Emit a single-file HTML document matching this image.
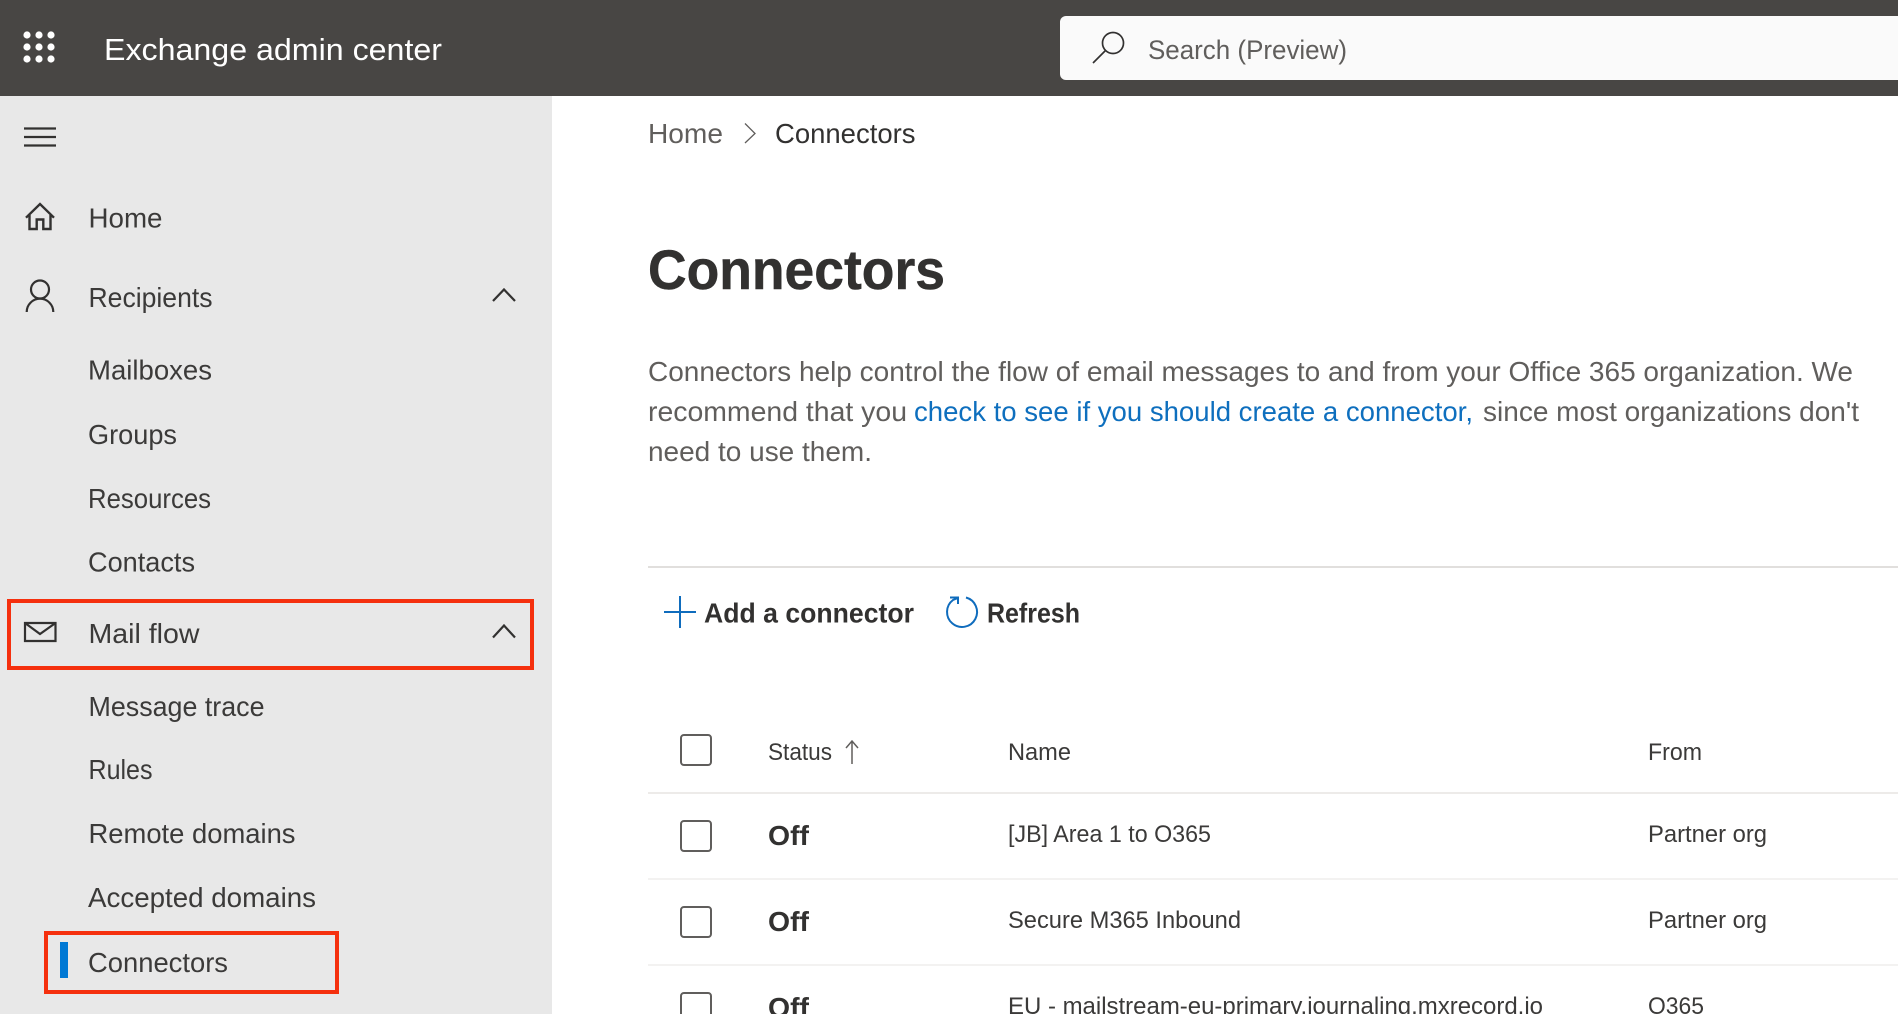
<!DOCTYPE html>
<html lang="en"><head><meta charset="utf-8"><title>Exchange admin center - Connectors</title>
<style>
html,body{margin:0;padding:0;width:1898px;height:1014px;overflow:hidden;background:#fff}
svg{display:block;filter:blur(.35px)}
text{font-family:"Liberation Sans",Arial,sans-serif;font-size:27px;fill:#323130}
.nav{font-size:28px;fill:#3b3a39}
.p{font-size:28px;fill:#605e5c}
.t{font-size:24px;fill:#3b3a39}
.ic{fill:none;stroke:#323130;stroke-width:2.2}
</style></head><body>
<svg width="1898" height="1014" viewBox="0 0 1898 1014" xmlns="http://www.w3.org/2000/svg">
<rect width="1898" height="1014" fill="#fff"/>
<rect width="1898" height="96" fill="#484644"/>
<rect y="96" width="552" height="918" fill="#e8e8e8"/>
<g fill="#fff"><circle cx="27" cy="35" r="3.600"/><circle cx="39" cy="35" r="3.600"/><circle cx="51" cy="35" r="3.600"/><circle cx="27" cy="47" r="3.600"/><circle cx="39" cy="47" r="3.600"/><circle cx="51" cy="47" r="3.600"/><circle cx="27" cy="59" r="3.600"/><circle cx="39" cy="59" r="3.600"/><circle cx="51" cy="59" r="3.600"/></g>
<text x="104" y="60" style="font-size:31px;fill:#fff" textLength="338" lengthAdjust="spacingAndGlyphs">Exchange admin center</text>
<path d="M1060 22a6 6 0 0 1 6-6H1898V80H1066a6 6 0 0 1-6-6z" fill="#fafafa"/>
<circle cx="1113" cy="43" r="10.500" fill="none" stroke="#323130" stroke-width="1.700"/>
<path d="M1105.500 50.500L1093 63" fill="none" stroke="#323130" stroke-width="1.700"/>
<text x="1148" y="59" style="font-size:27px;fill:#605e5c" textLength="199" lengthAdjust="spacingAndGlyphs">Search (Preview)</text>

<path class="ic" d="M24 128.500H56M24 137H56M24 145.500H56"/>
<path d="M26 217.700L40 204L54 217.700M29.500 215V229H36.700V219.500H43.300V229H50.500V215" fill="none" stroke="#323130" stroke-width="2.400"/>
<text class="nav" x="88.500" y="227.500" textLength="74" lengthAdjust="spacingAndGlyphs">Home</text>
<circle cx="40" cy="289.500" r="9" fill="none" stroke="#323130" stroke-width="2.200"/>
<path class="ic" d="M26.700 312A13.300 13.300 0 0 1 53.300 312"/>
<text class="nav" x="88.500" y="307" textLength="124" lengthAdjust="spacingAndGlyphs">Recipients</text>
<path class="ic" d="M493 301L504 289.500L515 301"/>
<text class="nav" x="88" y="379.500" textLength="124" lengthAdjust="spacingAndGlyphs">Mailboxes</text>
<text class="nav" x="88" y="444" textLength="89" lengthAdjust="spacingAndGlyphs">Groups</text>
<text class="nav" x="88" y="508" textLength="123" lengthAdjust="spacingAndGlyphs">Resources</text>
<text class="nav" x="88" y="571.500" textLength="107" lengthAdjust="spacingAndGlyphs">Contacts</text>
<path class="ic" d="M25 623H55.500V641H25ZM25 623L40 634L55.500 623"/>
<text class="nav" x="88.500" y="643" textLength="111" lengthAdjust="spacingAndGlyphs">Mail flow</text>
<path class="ic" d="M493 637.500L504 625.500L515 637.500"/>
<text class="nav" x="88.500" y="716" textLength="176" lengthAdjust="spacingAndGlyphs">Message trace</text>
<text class="nav" x="88.500" y="779" textLength="64" lengthAdjust="spacingAndGlyphs">Rules</text>
<text class="nav" x="88.500" y="843" textLength="207" lengthAdjust="spacingAndGlyphs">Remote domains</text>
<text class="nav" x="88" y="907" textLength="228" lengthAdjust="spacingAndGlyphs">Accepted domains</text>
<text class="nav" x="88" y="972" textLength="140" lengthAdjust="spacingAndGlyphs">Connectors</text>
<rect x="60" y="942" width="8" height="36" fill="#0078d4"/>
<rect x="9" y="601" width="523" height="67" fill="none" stroke="#f5300e" stroke-width="4"/>
<rect x="46" y="933" width="291" height="59" fill="none" stroke="#f5300e" stroke-width="4"/>

<text x="648" y="143" style="font-size:28px;fill:#605e5c" textLength="75" lengthAdjust="spacingAndGlyphs">Home</text>
<path d="M745 123.500L755 133.500L745 143" fill="none" stroke="#605e5c" stroke-width="1.300"/>
<text x="775" y="143" style="font-size:28px;fill:#323130" textLength="140.500" lengthAdjust="spacingAndGlyphs">Connectors</text>
<text x="648" y="289" style="font-size:56px;font-weight:700;fill:#323130;stroke:#323130;stroke-width:.5" textLength="297" lengthAdjust="spacingAndGlyphs">Connectors</text>
<text class="p" x="648" y="381" textLength="1205" lengthAdjust="spacingAndGlyphs">Connectors help control the flow of email messages to and from your Office 365 organization. We</text>
<text class="p" x="648" y="421" textLength="259" lengthAdjust="spacingAndGlyphs">recommend that you</text>
<text class="p" x="914" y="421" style="fill:#0e6fbe" textLength="559" lengthAdjust="spacingAndGlyphs">check to see if you should create a connector,</text>
<text class="p" x="1483" y="421" textLength="376" lengthAdjust="spacingAndGlyphs">since most organizations don't</text>
<text class="p" x="648" y="461" textLength="224" lengthAdjust="spacingAndGlyphs">need to use them.</text>
<rect x="648" y="566" width="1250" height="2" fill="#e1dfdd"/>

<path d="M664 612H696M680 596V628" fill="none" stroke="#0f6cbd" stroke-width="2"/>
<text x="704" y="622.500" style="font-size:28px;font-weight:700;fill:#323130" textLength="210" lengthAdjust="spacingAndGlyphs">Add a connector</text>
<path d="M966 597.500A15 15 0 1 1 953 600L958 598" fill="none" stroke="#0f6cbd" stroke-width="2"/>
<path d="M950 597.500H958V604" fill="none" stroke="#0f6cbd" stroke-width="2"/>
<text x="987" y="622.500" style="font-size:28px;font-weight:700;fill:#323130" textLength="93" lengthAdjust="spacingAndGlyphs">Refresh</text>

<rect x="681" y="735" width="30" height="30" rx="3" fill="none" stroke="#605e5c" stroke-width="2"/>
<text class="t" x="768" y="760" textLength="64" lengthAdjust="spacingAndGlyphs">Status</text>
<path d="M852 764V741M846 748L852 741L858 748" fill="none" stroke="#605e5c" stroke-width="1.500"/>
<text class="t" x="1008" y="760" textLength="63" lengthAdjust="spacingAndGlyphs">Name</text>
<text class="t" x="1648" y="760" textLength="54" lengthAdjust="spacingAndGlyphs">From</text>
<rect x="648" y="792" width="1250" height="2" fill="#edebe9"/>

<rect x="681" y="821" width="30" height="30" rx="3" fill="none" stroke="#605e5c" stroke-width="2"/>
<text x="768" y="845" style="font-size:28px;font-weight:700;fill:#323130" textLength="41" lengthAdjust="spacingAndGlyphs">Off</text>
<text class="t" x="1008" y="842" textLength="203" lengthAdjust="spacingAndGlyphs">[JB] Area 1 to O365</text>
<text class="t" x="1648" y="842" textLength="119" lengthAdjust="spacingAndGlyphs">Partner org</text>
<rect x="648" y="878" width="1250" height="2" fill="#f3f2f1"/>

<rect x="681" y="907" width="30" height="30" rx="3" fill="none" stroke="#605e5c" stroke-width="2"/>
<text x="768" y="931" style="font-size:28px;font-weight:700;fill:#323130" textLength="41" lengthAdjust="spacingAndGlyphs">Off</text>
<text class="t" x="1008" y="928" textLength="233" lengthAdjust="spacingAndGlyphs">Secure M365 Inbound</text>
<text class="t" x="1648" y="928" textLength="119" lengthAdjust="spacingAndGlyphs">Partner org</text>
<rect x="648" y="964" width="1250" height="2" fill="#f3f2f1"/>

<rect x="681" y="993" width="30" height="30" rx="3" fill="none" stroke="#605e5c" stroke-width="2"/>
<text x="768" y="1017" style="font-size:28px;font-weight:700;fill:#323130" textLength="41" lengthAdjust="spacingAndGlyphs">Off</text>
<text class="t" x="1008" y="1014" textLength="535" lengthAdjust="spacingAndGlyphs">EU - mailstream-eu-primary.journaling.mxrecord.io</text>
<text class="t" x="1648" y="1014" textLength="56" lengthAdjust="spacingAndGlyphs">O365</text>
</svg>
</body></html>
